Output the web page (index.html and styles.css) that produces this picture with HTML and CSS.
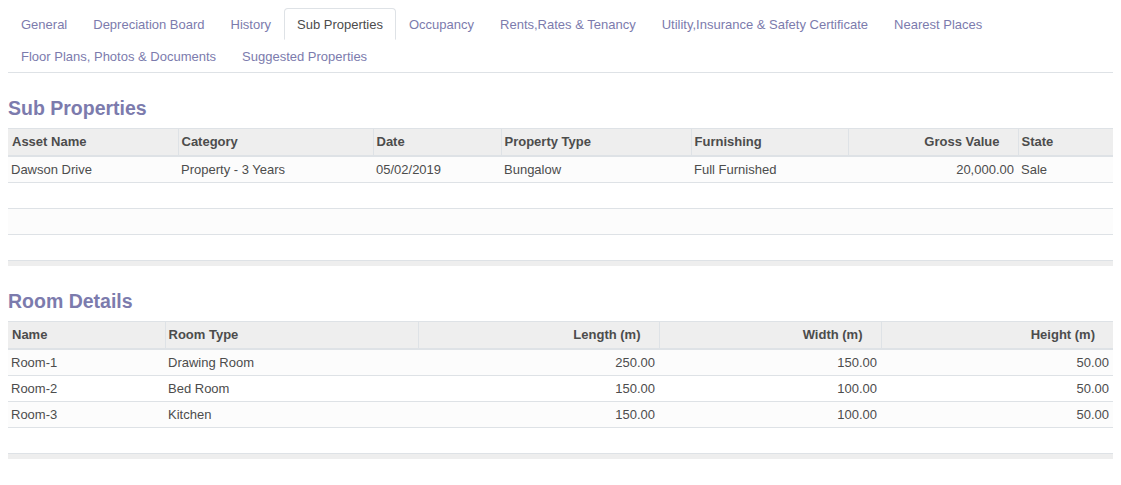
FILE: index.html
```html
<!DOCTYPE html>
<html>
<head>
<meta charset="utf-8">
<link rel="stylesheet" href="styles.css">
</head>
<body>
<ul class="tabs">
  <li><a class="tab">General</a></li>
  <li><a class="tab">Depreciation Board</a></li>
  <li><a class="tab">History</a></li>
  <li><a class="tab active">Sub Properties</a></li>
  <li><a class="tab">Occupancy</a></li>
  <li><a class="tab">Rents,Rates &amp; Tenancy</a></li>
  <li><a class="tab">Utility,Insurance &amp; Safety Certificate</a></li>
  <li><a class="tab">Nearest Places</a></li>
  <li><a class="tab">Floor Plans, Photos &amp; Documents</a></li>
  <li><a class="tab">Suggested Properties</a></li>
</ul>

<h2 class="sep-title">Sub Properties</h2>
<table class="list">
  <colgroup>
    <col style="width:170px"><col style="width:195px"><col style="width:128px"><col style="width:190px"><col style="width:157px"><col style="width:170px"><col style="width:95px">
  </colgroup>
  <thead>
    <tr>
      <th>Asset Name</th><th>Category</th><th>Date</th><th>Property Type</th><th>Furnishing</th><th class="num">Gross Value</th><th>State</th>
    </tr>
  </thead>
  <tbody>
    <tr class="odd"><td>Dawson Drive</td><td>Property - 3 Years</td><td>05/02/2019</td><td>Bungalow</td><td>Full Furnished</td><td class="num">20,000.00</td><td>Sale</td></tr>
    <tr><td colspan="7">&nbsp;</td></tr>
    <tr class="odd"><td colspan="7">&nbsp;</td></tr>
    <tr><td colspan="7">&nbsp;</td></tr>
  </tbody>
  <tfoot><tr><td colspan="7"></td></tr></tfoot>
</table>

<h2 class="sep-title">Room Details</h2>
<table class="list">
  <colgroup>
    <col style="width:157px"><col style="width:253px"><col style="width:241px"><col style="width:222px"><col style="width:232px">
  </colgroup>
  <thead>
    <tr>
      <th>Name</th><th>Room Type</th><th class="num">Length (m)</th><th class="num">Width (m)</th><th class="num">Height (m)</th>
    </tr>
  </thead>
  <tbody>
    <tr class="odd"><td>Room-1</td><td>Drawing Room</td><td class="num">250.00</td><td class="num">150.00</td><td class="num">50.00</td></tr>
    <tr><td>Room-2</td><td>Bed Room</td><td class="num">150.00</td><td class="num">100.00</td><td class="num">50.00</td></tr>
    <tr class="odd"><td>Room-3</td><td>Kitchen</td><td class="num">150.00</td><td class="num">100.00</td><td class="num">50.00</td></tr>
    <tr><td colspan="5">&nbsp;</td></tr>
  </tbody>
  <tfoot><tr><td colspan="5"></td></tr></tfoot>
</table>
</body>
</html>
```

FILE: styles.css
```css
html, body {
  background: #ffffff;
}
body {
  margin: 8px;
  font-family: "Liberation Sans", Arial, sans-serif;
  font-size: 13px;
  color: #4c4c4c;
}

.tabs {
  list-style: none;
  margin: 0;
  padding: 0;
  display: flex;
  flex-wrap: wrap;
  border-bottom: 1px solid #dee2e6;
}
.tab {
  display: block;
  padding: 8px 12px 6px;
  line-height: 16px;
  border: 1px solid transparent;
  border-radius: 4px 4px 0 0;
  color: #7c7bad;
  cursor: pointer;
}
.tab.active {
  color: #4c4c4c;
  background: #ffffff;
  border-color: #dee2e6 #dee2e6 #ffffff;
}

.sep-title {
  margin: 21px 0 6px;
  font-size: 19.5px;
  line-height: 28px;
  font-weight: bold;
  color: #7c7bad;
}

.list {
  width: 100%;
  table-layout: fixed;
  border-collapse: collapse;
  border-spacing: 0;
}
.list th {
  height: 24px;
  padding: 0 4px 2px;
  background: #eeeeee;
  border-top: 1px solid #dee2e6;
  border-bottom: 2px solid #dee2e6;
  text-align: left;
  font-weight: bold;
  white-space: nowrap;
  overflow: hidden;
}
.list th + th {
  border-left: 1px solid #dee2e6;
  padding-left: 3px;
}
.list th.num {
  text-align: right;
  padding-right: 18px;
}
.list td {
  height: 25px;
  padding: 0 4px 0 3px;
  border-bottom: 1px solid #dee2e6;
  white-space: nowrap;
  overflow: hidden;
}
.list td.num {
  text-align: right;
}
.list tbody tr {
  background: #ffffff;
}
.list tbody tr.odd {
  background: #fcfcfc;
}
.list tfoot td {
  height: 5px;
  padding: 0;
  background: #eeeeee;
  border-bottom: none;
}
```
